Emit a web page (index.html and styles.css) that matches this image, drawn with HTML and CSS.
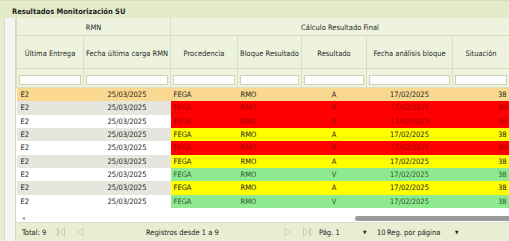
FILE: index.html
```html
<!DOCTYPE html>
<html lang="es">
<head>
    <meta charset="UTF-8">
    <title>Resultados Monitorización SU</title>
    <link rel="stylesheet" href="styles.css">
</head>
<body>
    <div class="panel">
        <div class="panel-title">Resultados Monitorización SU</div>
        <div class="panel-body">
            <div class="grid">
                <table class="grid-table">
                    <colgroup>
                        <col style="width:67px">
                        <col style="width:87px">
                        <col style="width:67px">
                        <col style="width:64px">
                        <col style="width:65px">
                        <col style="width:86px">
                        <col style="width:57px">
                    </colgroup>
                    <thead>
                        <tr class="group-row">
                            <th colspan="2">RMN</th>
                            <th colspan="5">Cálculo Resultado Final</th>
                        </tr>
                        <tr class="head-row">
                            <th>Última Entrega</th>
                            <th>Fecha última carga RMN</th>
                            <th>Procedencia</th>
                            <th>Bloque Resultado</th>
                            <th>Resultado</th>
                            <th>Fecha análisis bloque</th>
                            <th>Situación</th>
                        </tr>
                        <tr class="filter-row">
                            <th><input type="text"></th>
                            <th><input type="text"></th>
                            <th><input type="text"></th>
                            <th><input type="text"></th>
                            <th><input type="text"></th>
                            <th><input type="text"></th>
                            <th><input type="text"></th>
                        </tr>
                    </thead>
                    <tbody id="rows"></tbody>
                </table>
                <div class="hscroll">
                    <span class="hscroll-arrow">&#9666;</span>
                    <span class="hscroll-thumb"></span>
                </div>
            </div>
            <div class="pager">
                <span class="total">Total: 9</span>
                <span class="pager-btn">
                    <svg width="10" height="10" viewBox="0 0 10 10"><rect x="1" y="1" width="1.5" height="8" fill="#c9cdbd"/><path d="M8.5 1 L3.5 5 L8.5 9 Z" fill="none" stroke="#c9cdbd" stroke-width="1"/></svg>
                </span>
                <span class="pager-btn">
                    <svg width="10" height="10" viewBox="0 0 10 10"><path d="M7 1 L2.5 5 L7 9 Z" fill="none" stroke="#c9cdbd" stroke-width="1"/></svg>
                </span>
                <span class="records">Registros desde 1 a 9</span>
                <span class="pager-btn">
                    <svg width="10" height="10" viewBox="0 0 10 10"><path d="M3 1 L7.5 5 L3 9 Z" fill="none" stroke="#c9cdbd" stroke-width="1"/></svg>
                </span>
                <span class="pager-btn last">
                    <svg width="10" height="10" viewBox="0 0 10 10"><path d="M1.5 1 L6.5 5 L1.5 9 Z" fill="none" stroke="#c9cdbd" stroke-width="1"/><rect x="7.5" y="1" width="1.5" height="8" fill="#c9cdbd"/></svg>
                </span>
                <span class="page">Pág. 1</span>
                <span class="drop">&#9660;</span>
                <span class="per-page">10</span>
                <span class="per-label">Reg. por página</span>
                <span class="drop">&#9660;</span>
            </div>
        </div>
    </div>

    <script>
        var data = [
            { estado: 'sel', res: 'A', alt: false },
            { estado: 'red', res: 'R', alt: true },
            { estado: 'red', res: 'R', alt: false },
            { estado: 'yellow', res: 'A', alt: true },
            { estado: 'red', res: 'R', alt: false },
            { estado: 'yellow', res: 'A', alt: true },
            { estado: 'green', res: 'V', alt: false },
            { estado: 'yellow', res: 'A', alt: true },
            { estado: 'green', res: 'V', alt: false }
        ];

        var tbody = document.getElementById('rows');
        data.forEach(function(r) {
            var tr = document.createElement('tr');
            tr.className = 'row' + (r.alt ? ' alt' : '') + (r.estado === 'sel' ? ' selected' : '');
            var c = r.estado === 'sel' ? '' : ' ' + r.estado;
            tr.innerHTML =
                '<td class="left">E2</td>' +
                '<td class="center">25/03/2025</td>' +
                '<td class="left' + c + '">FEGA</td>' +
                '<td class="left' + c + '">RMO</td>' +
                '<td class="center' + c + '">' + r.res + '</td>' +
                '<td class="center' + c + '">17/02/2025</td>' +
                '<td class="right' + c + '">38</td>';
            tbody.appendChild(tr);
        });
    </script>
</body>
</html>
```

FILE: styles.css
```css
body {
    margin: 0;
    font-family: 'DejaVu Sans Condensed', 'DejaVu Sans', sans-serif;
    font-size: 7.5px;
    color: #222;
    background-color: #ebebe4;
}
.panel {
    width: 509px;
    height: 241px;
    overflow: hidden;
    background-color: #e9eed3;
}
.panel-title {
    height: 18px;
    line-height: 21px;
    padding-left: 12px;
    font-weight: bold;
    color: #1e1e1e;
    background-color: #e4ebcb;
    border-top: 1px solid #d7ddc0;
    box-sizing: border-box;
}
.panel-body {
    margin-left: 4px;
    border-left: 1px solid #d8d8cc;
    padding-left: 10px;
    background-color: #f6f6f0;
}
.grid {
    background-color: #fff;
    border-left: 1px solid #d3d9bd;
}
.grid-table {
    border-collapse: collapse;
    table-layout: fixed;
    width: 494px;
}
.grid-table th {
    font-weight: normal;
    color: #2a2a2a;
    background-color: #eef3dd;
    border: 1px solid #d9dfc4;
    border-top: none;
    padding: 2px 0 0;
}
.group-row th {
    height: 15px;
}
.head-row th {
    height: 30px;
}
.filter-row th {
    height: 18px;
    padding: 0 2px;
}
.filter-row input {
    display: block;
    width: 100%;
    height: 10px;
    margin: 3px 0 0;
    padding: 0;
    border: 1px solid #ccd3b5;
    box-sizing: border-box;
    background-color: #fff;
}
.row td {
    height: 13.33px;
    padding: 0 3px;
    white-space: nowrap;
    overflow: hidden;
    background-color: #fff;
}
.row.alt td {
    background-color: #e6e6de;
}
.row.selected td {
    background-color: #fbd88f;
}
.row td.red {
    background-color: #fe0000;
    color: #a80000;
}
.row td.yellow {
    background-color: #ffff00;
    color: #222;
}
.row td.green {
    background-color: #8fea8f;
    color: #2b572b;
}
.left { text-align: left; }
.center { text-align: center; }
.right { text-align: right; }
.row td.left:first-child {
    padding-left: 4px;
}
.hscroll {
    height: 14px;
    display: flex;
    align-items: center;
    justify-content: space-between;
    font-size: 6px;
    color: #888;
}
.hscroll-arrow {
    padding-left: 6px;
    margin-top: 6px;
}
.hscroll-thumb {
    width: 154px;
    height: 5px;
    margin-top: 7px;
    background-color: #9a9a9a;
    border-radius: 3px 0 0 3px;
}
.pager {
    height: 20px;
    display: flex;
    align-items: center;
    background-color: #e9eed3;
    border-top: 1px solid #d9dfc4;
    border-left: 1px solid #d3d9bd;
    box-sizing: border-box;
    padding-left: 6px;
}
.total {
    width: 34px;
}
.pager-btn {
    display: flex;
    width: 20px;
}
.pager-btn.last {
    width: 17px;
}
.records {
    margin-left: 50px;
    width: 136px;
}
.page {
    width: 44px;
}
.drop {
    font-size: 5px;
    width: 14px;
}
.per-page {
    width: 10px;
}
.per-label {
    width: 68px;
}
```
